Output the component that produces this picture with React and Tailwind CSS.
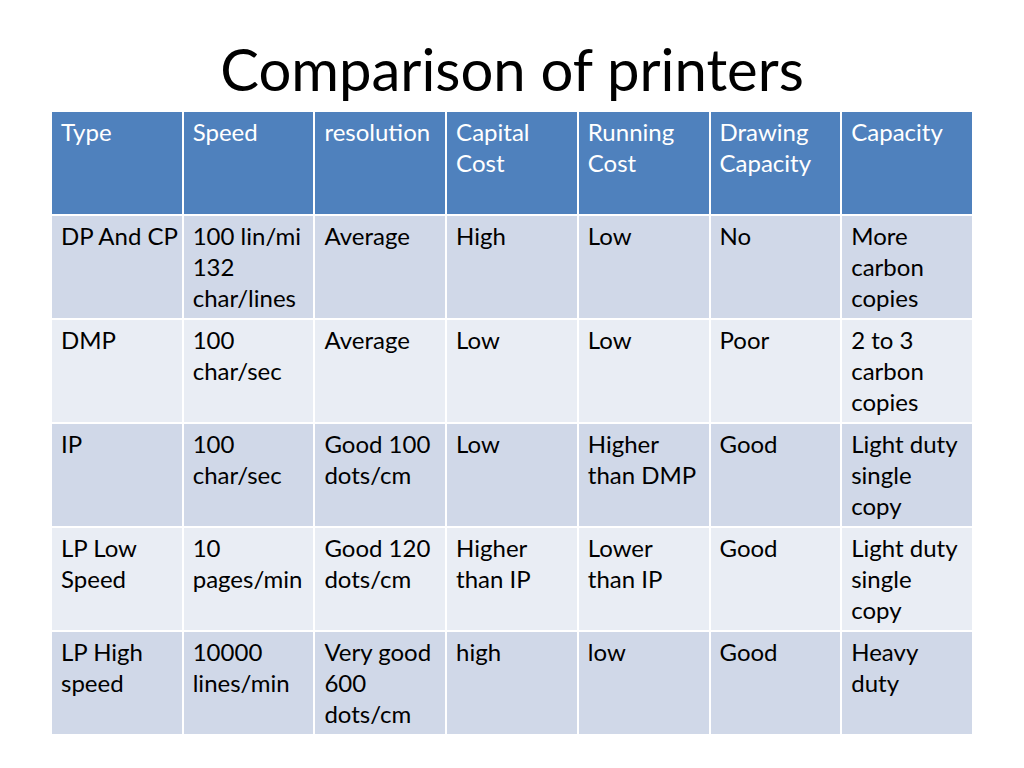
const HEAD = [['Type'], ['Speed'], ['resolution'], ['Capital', 'Cost'], ['Running', 'Cost'], ['Drawing', 'Capacity'], ['Capacity']];

const ROWS = [
  [['DP And CP'], ['100 lin/mi', '132', 'char/lines'], ['Average'], ['High'], ['Low'], ['No'], ['More', 'carbon', 'copies']],
  [['DMP'], ['100', 'char/sec'], ['Average'], ['Low'], ['Low'], ['Poor'], ['2 to 3', 'carbon', 'copies']],
  [['IP'], ['100', 'char/sec'], ['Good 100', 'dots/cm'], ['Low'], ['Higher', 'than DMP'], ['Good'], ['Light duty', 'single', 'copy']],
  [['LP Low', 'Speed'], ['10', 'pages/min'], ['Good 120', 'dots/cm'], ['Higher', 'than IP'], ['Lower', 'than IP'], ['Good'], ['Light duty', 'single', 'copy']],
  [['LP High', 'speed'], ['10000', 'lines/min'], ['Very good', '600', 'dots/cm'], ['high'], ['low'], ['Good'], ['Heavy', 'duty']],
];

function Lines({ lines }) {
  return lines.map((l, k) => (
    <div key={k} className="whitespace-nowrap">
      {l}
    </div>
  ));
}

export default function App() {
  return (
    <div
      className="h-[768px] w-[1024px] bg-white"
      style={{ fontFamily: 'Lato, "Open Sans", sans-serif' }}
    >
      <h1 className="pt-[34px] text-center text-[58px] leading-[70px] text-black">
        Comparison of printers
      </h1>

      <table className="mx-auto mt-[6px] w-[924px] table-fixed border-collapse text-[24px] leading-[31px]">
        <thead>
          <tr className="h-[104px] bg-[#4f81bd] text-white">
            {HEAD.map((h) => (
              <th
                key={h[0]}
                className="border-2 border-white pl-[9px] pr-1 pb-2 pt-[4px] text-left align-top font-normal"
              >
                <Lines lines={h} />
              </th>
            ))}
          </tr>
        </thead>
        <tbody>
          {ROWS.map((row, i) => (
            <tr
              key={row[0][0]}
              className={`h-[104px] text-black ${i % 2 === 0 ? 'bg-[#d0d8e8]' : 'bg-[#e9edf4]'}`}
            >
              {row.map((cell, j) => (
                <td
                  key={j}
                  className="border-2 border-white pl-[9px] pr-1 pb-1 pt-[4px] align-top"
                >
                  <Lines lines={cell} />
                </td>
              ))}
            </tr>
          ))}
        </tbody>
      </table>
    </div>
  );
}
